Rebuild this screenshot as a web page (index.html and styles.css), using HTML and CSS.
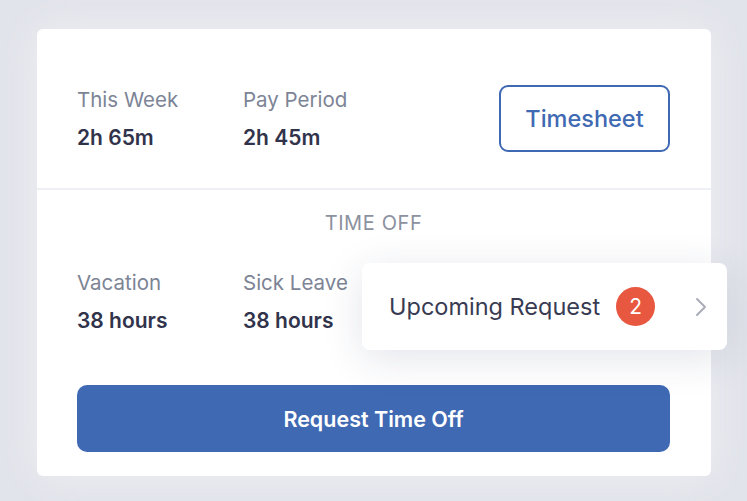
FILE: index.html
```html
<!DOCTYPE html>
<html>
<head>
<meta charset="utf-8">
<link rel="stylesheet" href="styles.css">
</head>
<body>
<div class="card">
  <div class="top">
    <div class="stat">
      <div class="label">This Week</div>
      <div class="value">2h 65m</div>
    </div>
    <div class="stat">
      <div class="label">Pay Period</div>
      <div class="value">2h 45m</div>
    </div>
    <button class="btn-outline">Timesheet</button>
  </div>
  <div class="bottom">
    <div class="section-title">TIME OFF</div>
    <div class="row">
      <div class="stat">
        <div class="label">Vacation</div>
        <div class="value">38 hours</div>
      </div>
      <div class="stat">
        <div class="label">Sick Leave</div>
        <div class="value">38 hours</div>
      </div>
    </div>
    <button class="btn-primary">Request Time Off</button>
  </div>
  <div class="popup">
    <span class="popup-text">Upcoming Request</span>
    <span class="badge">2</span>
    <svg class="chev" width="12" height="20" viewBox="0 0 12 20"><path d="M2 2 L10 10 L2 18" fill="none" stroke="#a9adb8" stroke-width="2" stroke-linecap="round" stroke-linejoin="round"/></svg>
  </div>
</div>
</body>
</html>
```
FILE: styles.css
```css
* { box-sizing: border-box; }
html, body { margin: 0; padding: 0; }
body {
  width: 747px;
  height: 501px;
  background: #e2e4eb;
  font-family: "Inter", "Liberation Sans", sans-serif;
  overflow: hidden;
  padding: 29px 0 0 37px;
}
.card {
  position: relative;
  width: 674px;
  height: 447px;
  background: #fff;
  border-radius: 6px;
  box-shadow: 0 0 40px rgba(250, 250, 252, 0.55);
}
.top {
  height: 161px;
  display: flex;
  align-items: flex-start;
  padding: 56px 41px 0 40px;
  border-bottom: 2px solid #eef0f5;
}
.top .stat { padding-top: 3px; }
.stat { width: 166px; }
.label {
  font-size: 20.5px;
  line-height: 24px;
  color: #7c8495;
}
.value {
  margin-top: 14px;
  font-size: 21px;
  line-height: 24px;
  font-weight: 600;
  color: #31334b;
}
.btn-outline {
  margin-left: auto;
  width: 171px;
  height: 67px;
  border: 2px solid #3f69b3;
  border-radius: 9px;
  background: #fff;
  color: #3f69b3;
  font-family: inherit;
  font-size: 23.5px;
  font-weight: 500;
}
.bottom {
  padding: 21px 41px 0 40px;
}
.section-title {
  text-align: center;
  font-size: 20px;
  line-height: 24px;
  letter-spacing: 0.6px;
  color: #8b919e;
}
.row {
  display: flex;
  margin-top: 36px;
}
.btn-primary {
  display: block;
  margin-top: 52px;
  width: 593px;
  height: 67px;
  border: 0;
  border-radius: 10px;
  background: #3f69b3;
  color: #fff;
  font-family: inherit;
  font-size: 21.5px;
  font-weight: 600;
}
.popup {
  position: absolute;
  left: 325px;
  top: 234px;
  width: 365px;
  height: 87px;
  background: #fff;
  border-radius: 8px;
  box-shadow: 0 8px 40px rgba(40, 50, 90, 0.13);
  display: flex;
  align-items: center;
  padding: 0 20px 0 27px;
}
.popup-text {
  font-size: 23.5px;
  color: #383b52;
}
.badge {
  margin-left: 16px;
  width: 39px;
  height: 39px;
  border-radius: 50%;
  background: #e8573f;
  color: #fff;
  font-size: 21px;
  display: flex;
  align-items: center;
  justify-content: center;
}
.chev { margin-left: auto; }
```
